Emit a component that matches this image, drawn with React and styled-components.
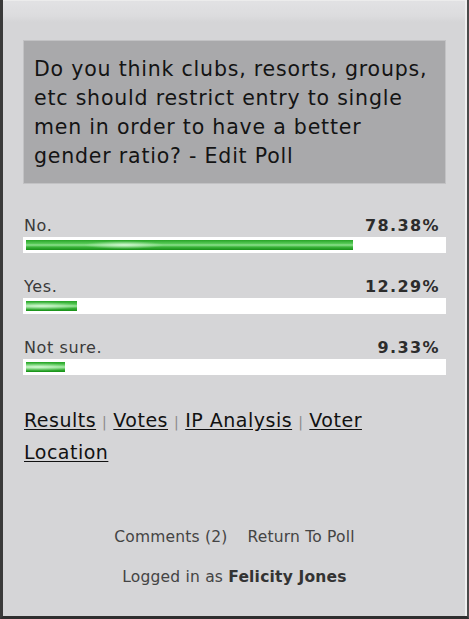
import React from 'react';
import styled, { createGlobalStyle } from 'styled-components';

const GlobalStyle = createGlobalStyle`
  html, body {
    margin: 0;
    padding: 0;
    background: #d5d5d7;
  }
  body {
    font-family: "DejaVu Sans", Verdana, sans-serif;
  }
`;

const Frame = styled.div`
  box-sizing: border-box;
  width: 469px;
  height: 619px;
  border-left: 3px solid #3a3a3a;
  border-right: 2px solid #4a4a4a;
  border-bottom: 3px solid #2e2e2e;
  background: linear-gradient(to bottom, #e2e2e4 0px, #dcdcde 16px, #d5d5d7 22px, #d5d5d7 100%);
  box-shadow: inset -2px 0 0 #eeeeee, inset 0 1px 0 #ececec;
  padding: 40px 21px 0 20px;
  display: flex;
  flex-direction: column;
`;

const Question = styled.div`
  background: #a9a9ab;
  border: 1px solid #c2c2c4;
  padding: 14px 8px 6px 10px;
  height: 144px;
  box-sizing: border-box;
  font-size: 20.5px;
  letter-spacing: 0.8px;
  line-height: 29px;
  color: #141414;
`;

const Results = styled.div`
  margin-top: 32px;
  display: flex;
  flex-direction: column;
  gap: 24px;
`;

const Row = styled.div`
  display: flex;
  flex-direction: column;
`;

const RowHead = styled.div`
  display: flex;
  justify-content: space-between;
  align-items: baseline;
  padding: 0 6px 0 1px;
  font-size: 16px;
  letter-spacing: 0.6px;
  line-height: 20px;
  color: #3a3a3a;
  margin-bottom: 1px;
`;

const Percent = styled.span`
  font-weight: bold;
  letter-spacing: 1.4px;
  color: #2c2c2c;
`;

const Track = styled.div`
  height: 16px;
  background: #ffffff;
  padding: 3px 3px;
  box-sizing: border-box;
`;

const Fill = styled.div`
  height: 10px;
  background:
    radial-gradient(ellipse 40px 4px at 30% 50%, rgba(230, 255, 230, 0.8), rgba(230, 255, 230, 0) 100%),
    linear-gradient(to bottom, #26a326 0%, #55c955 35%, #8fe08f 50%, #3cb63c 70%, #168f16 100%);
`;

const Links = styled.div`
  margin-top: 29px;
  padding-left: 1px;
  font-size: 19px;
  letter-spacing: 0.5px;
  line-height: 32px;
  color: #111;
`;

const Link = styled.a`
  color: #111;
  text-decoration: underline;
  text-underline-offset: 2px;
  cursor: pointer;
`;

const Sep = styled.span`
  display: inline-block;
  color: #8a8a8a;
  font-size: 14px;
  line-height: 16px;
  margin: 0 6px;
`;

const Footer = styled.div`
  margin-top: 59px;
  display: flex;
  flex-direction: column;
  align-items: center;
  gap: 20px;
  font-size: 15.5px;
  letter-spacing: 0.2px;
  line-height: 20px;
  color: #444;
`;

const FooterLinks = styled.div`
  display: flex;
  gap: 20px;
`;

const Name = styled.b`
  color: #333;
`;

const options = [
  { label: 'No.', pct: 78.38 },
  { label: 'Yes.', pct: 12.29 },
  { label: 'Not sure.', pct: 9.33 },
];

const App = () => (
  <>
    <GlobalStyle />
    <Frame>
      <Question>
        Do you think clubs, resorts, groups, etc should restrict entry to single men in order to have a better gender ratio? - Edit Poll
      </Question>
      <Results>
        {options.map((o) => (
          <Row key={o.label}>
            <RowHead>
              <span>{o.label}</span>
              <Percent>{o.pct.toFixed(2)}%</Percent>
            </RowHead>
            <Track>
              <Fill style={{ width: `${o.pct}%` }} />
            </Track>
          </Row>
        ))}
      </Results>
      <Links>
        <Link>Results</Link>
        <Sep>|</Sep>
        <Link>Votes</Link>
        <Sep>|</Sep>
        <Link>IP Analysis</Link>
        <Sep>|</Sep>
        <Link>Voter Location</Link>
      </Links>
      <Footer>
        <FooterLinks>
          <span>Comments (2)</span>
          <span>Return To Poll</span>
        </FooterLinks>
        <div>
          Logged in as <Name>Felicity Jones</Name>
        </div>
      </Footer>
    </Frame>
  </>
);

export default App;
